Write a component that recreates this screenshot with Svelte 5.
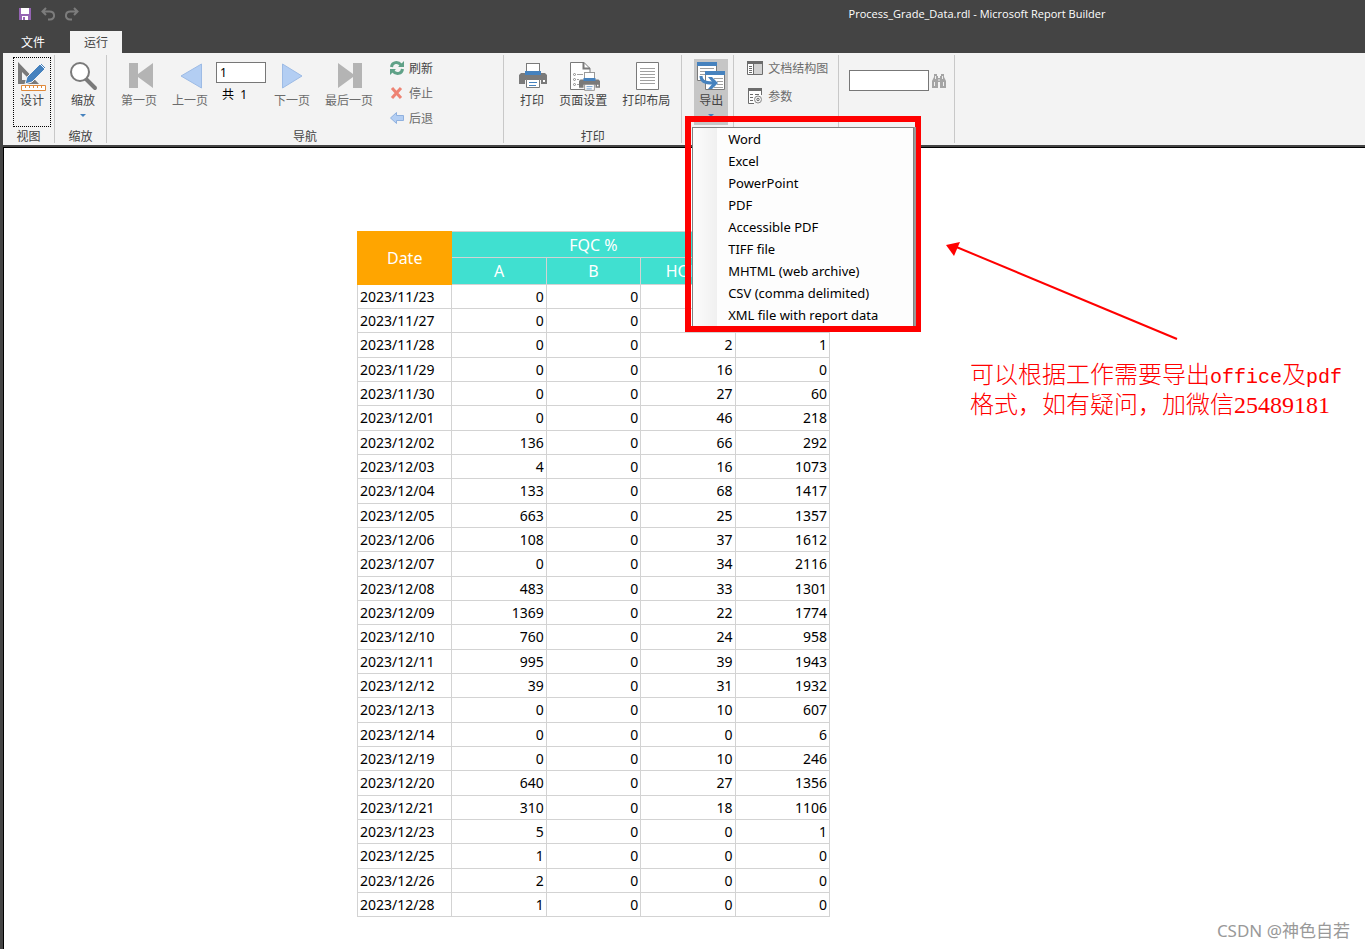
<script>
  let exportOpen = $state(true);
  let page = $state("1");
  let search = $state("");

  const formats = [
    "Word",
    "Excel",
    "PowerPoint",
    "PDF",
    "Accessible PDF",
    "TIFF file",
    "MHTML (web archive)",
    "CSV (comma delimited)",
    "XML file with report data",
  ];

  // date, A, B, HOLD, last column
  const rows = [
    ["2023/11/23", 0, 0, "", ""],
    ["2023/11/27", 0, 0, "", ""],
    ["2023/11/28", 0, 0, 2, 1],
    ["2023/11/29", 0, 0, 16, 0],
    ["2023/11/30", 0, 0, 27, 60],
    ["2023/12/01", 0, 0, 46, 218],
    ["2023/12/02", 136, 0, 66, 292],
    ["2023/12/03", 4, 0, 16, 1073],
    ["2023/12/04", 133, 0, 68, 1417],
    ["2023/12/05", 663, 0, 25, 1357],
    ["2023/12/06", 108, 0, 37, 1612],
    ["2023/12/07", 0, 0, 34, 2116],
    ["2023/12/08", 483, 0, 33, 1301],
    ["2023/12/09", 1369, 0, 22, 1774],
    ["2023/12/10", 760, 0, 24, 958],
    ["2023/12/11", 995, 0, 39, 1943],
    ["2023/12/12", 39, 0, 31, 1932],
    ["2023/12/13", 0, 0, 10, 607],
    ["2023/12/14", 0, 0, 0, 6],
    ["2023/12/19", 0, 0, 10, 246],
    ["2023/12/20", 640, 0, 27, 1356],
    ["2023/12/21", 310, 0, 18, 1106],
    ["2023/12/23", 5, 0, 0, 1],
    ["2023/12/25", 1, 0, 0, 0],
    ["2023/12/26", 2, 0, 0, 0],
    ["2023/12/28", 1, 0, 0, 0],
  ];
</script>

{#snippet printer()}
  <rect x="7.5" y=".5" width="13" height="10" fill="#fff" stroke="#7a7a7a" />
  <path d="M2 10h24l2 2v9h-6v-4H6v4H0v-9z" fill="#7a7a7a" />
  <path d="M6 8h16v4H6z" fill="#4682be" />
  <path d="M24 17h2v2h-2z" fill="#fff" />
  <path d="M7.500 16.500h13v8h-13z" fill="#fff" stroke="#7a7a7a" />
  <path d="M10 19.500h8M10 22.500h7" stroke="#4682be" />
{/snippet}

<div class="app">
  <header>
    <div class="quick">
      <button aria-label="保存">
        <svg width="12" height="12" viewBox="0 0 12 12">
          <path d="M0 0h12v12H0z" fill="#9564b4" />
          <path d="M2 0h8v6H2zM3 8h6v4H3z" fill="#fff" />
          <path d="M4 9h2v3H4z" fill="#9564b4" />
        </svg>
      </button>
      <button aria-label="撤销">
        <svg width="14" height="14" viewBox="0 0 14 14" fill="none" stroke="#7c7c7c" stroke-width="2">
          <path d="M5 1 1.500 4.500 5 8M2 4.500h6.500c6 0 6 8 .5 8H7" />
        </svg>
      </button>
      <button aria-label="恢复">
        <svg width="14" height="14" viewBox="0 0 14 14" fill="none" stroke="#7c7c7c" stroke-width="2">
          <path d="m9 1 3.500 3.500L9 8M12 4.500H5.500c-6 0-6 8-.5 8h2" />
        </svg>
      </button>
    </div>
    <div class="title">Process_Grade_Data.rdl - Microsoft Report Builder</div>
  </header>

  <nav class="tabs">
    <button>文件</button>
    <button class="active">运行</button>
  </nav>

  <div class="ribbon">
    <section class="group view">
      <div class="body">
        <button class="big">
          <svg width="30" height="30" viewBox="0 0 30 30">
            <path d="M1 1v22h21zM5 11l8 8H5z" fill="#7a7a7a" fill-rule="evenodd" />
            <path d="m8 23 2-7L24 2l5 5-14 14z" fill="#4682be" stroke="#f3f3f3" />
            <path d="m23 3 5 5" stroke="#fff" />
            <path d="M4.500 24.500h24v5h-24z" fill="#fff" stroke="#e08a3c" />
            <path d="M8.500 25v2m4-2v2m4-2v2m4-2v2m4-2v2" stroke="#e08a3c" />
          </svg>
          设计
        </button>
      </div>
      <h2>视图</h2>
    </section>

    <section class="group zoom">
      <div class="body">
        <button class="big">
          <svg width="30" height="30" viewBox="0 0 30 30">
            <path d="m18 18 9 9" stroke="#7a7a7a" stroke-width="4" stroke-linecap="round" />
            <circle cx="12" cy="11" r="9" fill="#fff" stroke="#7a7a7a" stroke-width="2" />
          </svg>
          缩放
          <i class="caret"></i>
        </button>
      </div>
      <h2>缩放</h2>
    </section>

    <section class="group navigate">
      <div class="body">
        <button class="big dim">
          <svg width="30" height="30" viewBox="0 0 30 30">
            <path d="M5 2h9v11L29 2v25L14 16v11H5z" fill="#b4b4b4" />
          </svg>
          第一页
        </button>
        <button class="big dim">
          <svg width="30" height="30" viewBox="0 0 30 30">
            <path d="M6 15 26.500 3v24z" fill="#b3cef3" stroke="#9dbbe5" />
          </svg>
          上一页
        </button>
        <div class="pager">
          <input aria-label="页码" bind:value={page} />
          <span>共&nbsp; 1</span>
        </div>
        <button class="big dim">
          <svg width="30" height="30" viewBox="0 0 30 30">
            <path d="M25 15 5.500 3v24z" fill="#b3cef3" stroke="#9dbbe5" />
          </svg>
          下一页
        </button>
        <button class="big dim">
          <svg width="30" height="30" viewBox="0 0 30 30">
            <path d="M4 2l15 11V2h9v25h-9V16L4 27z" fill="#b4b4b4" />
          </svg>
          最后一页
        </button>
        <div class="stack">
          <button>
            <svg width="14" height="14" viewBox="0 0 14 14">
              <path d="M1.500 6C2 1 8 0 11 4M12.500 8C12 13 6 14 3 10" fill="none" stroke="#5fa187" stroke-width="3" />
              <path d="M14 0v6H8zM0 14V8h6z" fill="#5fa187" />
            </svg>
            刷新
          </button>
          <button class="dim">
            <svg width="14" height="14" viewBox="0 0 14 14">
              <path d="m2 2 9 10M11 2 2 12" stroke="#ee8373" stroke-width="3" />
            </svg>
            停止
          </button>
          <button class="dim">
            <svg width="14" height="14" viewBox="0 0 14 14">
              <path d="m.5 7 6-5.500v3h7v5h-7v3z" fill="#b3cef3" stroke="#8fb0de" />
            </svg>
            后退
          </button>
        </div>
      </div>
      <h2>导航</h2>
    </section>

    <section class="group print">
      <div class="body">
        <button class="big">
          <svg width="30" height="30" viewBox="0 0 30 30">
            <g transform="translate(2 2)">{@render printer()}</g>
          </svg>
          打印
        </button>
        <button class="big">
          <svg width="34" height="30" viewBox="0 0 34 30">
            <path d="M4.500 1.500H18l6 6v21H4.500z" fill="#fff" stroke="#7a7a7a" />
            <path d="M17.500 1.500v6H24" fill="none" stroke="#7a7a7a" stroke-width="2" />
            <path d="M11 13.500h6M11 18.500h3M11 23.500h3" stroke="#a0a0a0" />
            <g fill="#fff" stroke="#8a8a8a">
              <circle cx="8.500" cy="13.500" r="1" /><circle cx="8.500" cy="18.500" r="1" /><circle cx="8.500" cy="23.500" r="1" />
            </g>
            <path d="M13 18h21v10H13z" fill="#f3f3f3" />
            <g transform="translate(13 11) scale(.75)">{@render printer()}</g>
          </svg>
          页面设置
        </button>
        <button class="big">
          <svg width="30" height="30" viewBox="0 0 30 30">
            <path d="M5.500 1.500h22v27h-22z" fill="#fff" stroke="#7a7a7a" />
            <path d="M9 7.500h15M9 10.500h15M9 13.500h15M9 16.500h15M9 19.500h15M9 22.500h15" stroke="#a0a0a0" />
          </svg>
          打印布局
        </button>
      </div>
      <h2>打印</h2>
    </section>

    <section class="group export">
      <div class="body">
        <button class="big pressed" aria-expanded={exportOpen} onclick={() => (exportOpen = !exportOpen)}>
          <svg width="30" height="30" viewBox="0 0 30 30">
            <path d="M1.500 1.500h19v18h-19z" fill="#fff" stroke="#7a7a7a" />
            <path d="M1 1h20v4H1z" fill="#4682be" />
            <path d="M4 7.500h14M4 10.500h5M4 13.500h5" stroke="#a0a0a0" />
            <path d="M9.500 10.500h19v18h-19z" fill="#fff" stroke="#7a7a7a" />
            <path d="M9 10h20v4H9z" fill="#4682be" />
            <path d="M18 17.500h9M21 20.500h6M21 23.500h6M18 26.500h9" stroke="#a0a0a0" />
            <path d="M5 15c0 5 3 7 12 7" fill="none" stroke="#4682be" stroke-width="3" />
            <path d="M12 16h4l6 6-6 6h-4l5-6z" fill="#4682be" />
          </svg>
          导出
          <i class="caret"></i>
        </button>
      </div>
      {#if exportOpen}
        <div class="frame">
          <div class="menu" role="menu">
            {#each formats as format}
              <button role="menuitem" onclick={() => (exportOpen = false)}>{format}</button>
            {/each}
          </div>
        </div>
      {/if}
    </section>

    <section class="group options">
      <div class="body">
        <div class="stack">
          <button class="dim">
            <svg width="16" height="16" viewBox="0 0 16 16">
              <path d="M.5 1.500h15v13H.5z" fill="#fff" stroke="#6c6c6c" />
              <path d="M0 1h16v3H0z" fill="#6c6c6c" />
              <path d="M6 4h9v10H6z" fill="#d2d2d2" />
              <path d="M6.500 4v10M2 6.500h3M2 8.500h3M2 10.500h3M2 12.500h3" stroke="#6c6c6c" />
            </svg>
            文档结构图
          </button>
          <button class="dim">
            <svg width="16" height="16" viewBox="0 0 16 16">
              <path d="M7 15.500H1.500v-14h13V7" fill="#fff" stroke="#6c6c6c" />
              <path d="M1 0h14v3H1z" fill="#6c6c6c" />
              <path d="M3 6.500h3M3 9.500h3M3 12.500h3M8 6.500h4" stroke="#6c6c6c" />
              <circle cx="11" cy="11.500" r="3.500" fill="#f3f3f3" stroke="#8a8a8a" />
              <circle cx="11" cy="11.500" r="1.200" fill="none" stroke="#6c6c6c" />
            </svg>
            参数
          </button>
        </div>
      </div>
    </section>

    <section class="group search">
      <div class="body">
        <input aria-label="查找" bind:value={search} />
        <button aria-label="查找下一个">
          <svg width="16" height="14" viewBox="0 0 16 14">
            <path d="M3 0h3v2h1v2h2V2h1V0h3v3l2 4v7H9V8H7v6H1V7l2-4z" fill="#a4a4a4" />
            <path d="M4.500 2v3M11.500 2v3M3.500 8v4M12.500 8v4M8 5v2" stroke="#eee" />
          </svg>
        </button>
      </div>
    </section>
  </div>

  <main>
    <table>
      <thead>
        <tr>
          <th class="date" rowspan="2">Date</th>
          <th colspan="3">FQC %</th>
          <th rowspan="2"></th>
        </tr>
        <tr>
          <th>A</th>
          <th>B</th>
          <th>HOLD</th>
        </tr>
      </thead>
      <tbody>
        {#each rows as row}
          <tr>
            {#each row as cell}
              <td>{cell}</td>
            {/each}
          </tr>
        {/each}
      </tbody>
    </table>

    <aside>
      <svg width="232" height="100" viewBox="0 0 232 100">
        <path d="M8 5 231 98" stroke="red" stroke-width="2" />
        <path d="M0 4 14 1 8 15z" fill="red" />
      </svg>
      <p>可以根据工作需要导出<span>office</span>及<span>pdf</span><br />格式，如有疑问，加微信<span class="digits">25489181</span></p>
    </aside>
    <div class="watermark">CSDN @神色自若</div>
  </main>
</div>

<style>
  :global(body) {
    margin: 0;
    background: #444;
  }

  .app {
    display: flex;
    flex-direction: column;
    min-height: 100vh;
    font-family: "Noto Sans", "Noto Sans CJK SC", sans-serif;
    font-size: 12px;
    color: #444;
  }

  button {
    padding: 0;
    border: 0;
    background: none;
    font: inherit;
    color: inherit;
    white-space: nowrap;
  }

  svg {
    display: block;
    flex: none;
  }

  input {
    box-sizing: border-box;
    height: 21px;
    padding: 0 3px;
    border: 1px solid #777;
    background: #fff;
    font: inherit;
    color: #000;
  }

  header {
    display: grid;
    grid-template-columns: 589px 1fr;
    align-items: center;
    height: 27px;
    color: #fff;
  }

  .quick {
    display: flex;
    align-items: center;
    gap: 10px;
    padding-left: 19px;
  }

  .title {
    font-family: "Open Sans", sans-serif;
    font-size: 11px;
    text-align: center;
  }

  .tabs {
    display: flex;
    height: 26px;
    align-items: flex-end;
    gap: 13px;
    padding-left: 9px;
  }

  .tabs button {
    height: 22px;
    padding: 0 12px 1px;
    color: #fff;
  }

  .tabs .active {
    padding: 0 14px;
    background: #f3f3f3;
    color: #444;
  }

  .ribbon {
    display: flex;
    height: 92px;
    margin-left: 3px;
    background: #f3f3f3;
    border-bottom: 1px solid #444;
  }

  .group {
    position: relative;
    display: flex;
    flex-direction: column;
    box-sizing: border-box;
    height: 88px;
    margin-top: 2px;
    border-right: 1px solid #c8c8c8;
  }

  .body {
    display: flex;
    flex: 1;
    align-items: flex-start;
    gap: 1px;
    padding-top: 1px;
  }

  h2 {
    margin: 0;
    font-size: 12px;
    font-weight: 400;
    line-height: 12px;
    text-align: center;
  }

  .view .body { padding-left: 10px; padding-right: 3px; }
  .zoom .body { padding-left: 9px; padding-right: 4px; }
  .navigate .body { padding-left: 7px; padding-right: 70px; }
  .print .body { padding-left: 9px; padding-right: 4px; }
  .export .body { padding-left: 12px; padding-right: 5px; }
  .options .body { padding-left: 13px; padding-right: 10px; }
  .search .body { padding: 15px 6px 0 10px; }

  .big {
    display: flex;
    flex-direction: column;
    align-items: center;
    box-sizing: border-box;
    height: 66px;
    margin-top: 3px;
    padding: 2px 7px 0;
    line-height: 20px;
  }

  /* icons are wider than a two-character caption */
  .big svg {
    margin: 0 -3px;
  }

  .view .big {
    height: 70px;
    margin-top: 1px;
    padding: 3px 6px 0;
    border: 1px dotted #000;
  }

  .dim {
    color: #6c6c6c;
  }

  .pressed {
    padding: 2px 5px 0;
    background: #c6c6c6;
  }

  .caret {
    margin-top: 3px;
    border: 3px solid transparent;
    border-top-color: #4682be;
    border-bottom: 0;
  }

  .pager {
    display: flex;
    flex-direction: column;
    width: 50px;
    margin-top: 6px;
    color: #000;
  }

  .pager input {
    width: 100%;
  }

  .pager span {
    padding: 2px 0 0 6px;
  }

  .stack {
    display: flex;
    flex-direction: column;
    gap: 1px;
  }

  .navigate .stack {
    margin-left: 9px;
  }

  .options .stack {
    gap: 4px;
  }

  .stack button {
    display: flex;
    align-items: center;
    gap: 5px;
    height: 24px;
  }

  .search input {
    width: 80px;
  }

  .search button {
    align-self: flex-start;
    padding: 4px 1px;
  }

  .frame {
    position: absolute;
    top: 61px;
    left: 3px;
    z-index: 2;
    padding: 5px 1px 0;
    border: 6px solid red;
  }

  .menu {
    display: flex;
    flex-direction: column;
    width: 220px;
    border: 1px solid #808080;
    border-bottom: 0;
    background: linear-gradient(90deg, #fcfcfc, #f0f0f0 24px, #fdfdfd 24px);
    box-shadow: 2px 0 0 #999;
  }

  .menu button {
    height: 22px;
    padding-left: 35px;
    font-size: 13px;
    color: #000;
    text-align: left;
  }

  .menu button:hover {
    background: #d5e4f5;
  }

  main {
    position: relative;
    display: flex;
    flex: 1;
    align-items: flex-start;
    box-sizing: border-box;
    margin: 1px 0 0 3px;
    padding: 83px 0 30px 353px;
    border-top: 1px solid #000;
    border-left: 1px solid #000;
    background: #fff;
  }

  table {
    width: 473px;
    flex: none;
    table-layout: fixed;
    border-collapse: collapse;
    color: #000;
    font-size: 14px;
  }

  th,
  td {
    padding: 0 2px;
    border: 1px solid #d3d3d3;
    line-height: 20px;
    text-align: right;
  }

  th {
    height: 26px;
    box-sizing: border-box;
    background: #40e0d0;
    color: #fff;
    font-size: 16px;
    font-weight: 400;
    text-align: center;
  }

  tr:nth-child(2) th {
    height: 27px;
  }

  .date {
    border-color: orange;
    background: orange;
  }

  td:first-child {
    text-align: left;
  }

  tbody tr {
    height: 24px;
  }

  tbody tr:nth-child(3n) {
    height: 25px;
  }

  aside {
    margin: 10px 0 0 116px;
    color: red;
  }

  aside p {
    margin: 17px 0 0 24px;
    font-family: "Noto Sans CJK SC", sans-serif;
    font-size: 24px;
    font-weight: 300;
    line-height: 30px;
    white-space: nowrap;
  }

  aside span {
    font-family: "Liberation Mono", monospace;
    font-size: 20px;
    font-weight: 400;
    line-height: 1;
  }

  aside .digits {
    font-family: "Liberation Serif", serif;
    font-size: 24px;
  }

  .watermark {
    position: absolute;
    right: 15px;
    bottom: 6px;
    color: #999;
    font-size: 17px;
    line-height: 24px;
  }
</style>
